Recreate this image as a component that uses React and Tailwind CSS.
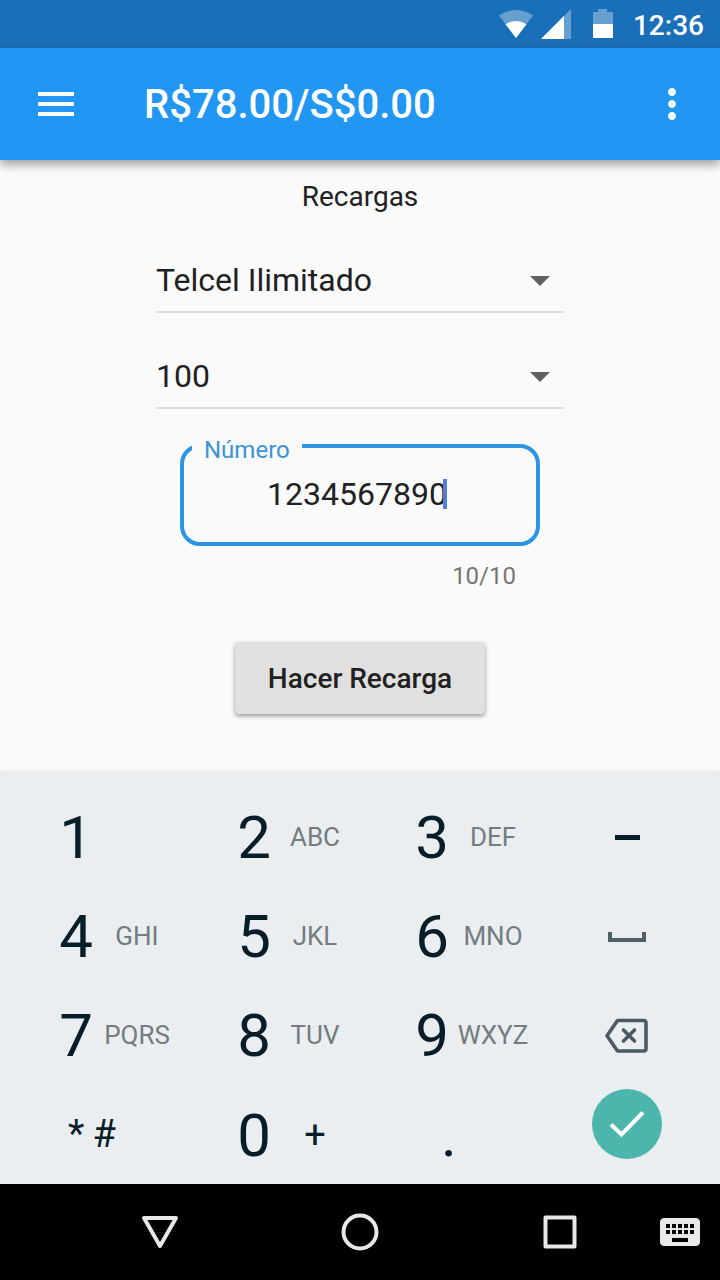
import { useState } from 'react'
import { MdMenu, MdMoreVert, MdArrowDropDown, MdKeyboard } from 'react-icons/md'

const CARRIERS = ['Telcel Ilimitado', 'Telcel', 'Movistar', 'Unefon']
const AMOUNTS = ['100', '50', '150', '200']
const MAX_LENGTH = 10

function WifiIcon() {
    return (
        <svg width="34" height="30" viewBox="0 0 34 30" aria-hidden="true">
            <path d="M17 29 L0 6.500 Q17 -4.500 34 6.500 Z" fill="#669fd0" />
            <path d="M17 29 L6.500 15.200 Q17 8.600 27.500 15.200 Z" fill="#fff" />
        </svg>
    )
}

function SignalIcon() {
    return (
        <svg width="30" height="30" viewBox="0 0 30 30" aria-hidden="true">
            <path d="M0 30 L30 0 V30 Z" fill="#669fd0" />
            <path d="M0 30 L23 7 V30 Z" fill="#fff" />
        </svg>
    )
}

function BatteryIcon() {
    return (
        <svg width="20" height="30" viewBox="0 0 20 30" aria-hidden="true">
            <path d="M0 3 H5 V0 H14 V3 H20 V15 H0 Z" fill="#669fd0" />
            <path d="M0 15 H20 V29 H0 Z" fill="#fff" />
        </svg>
    )
}

function BackspaceIcon() {
    return (
        <svg width="44" height="36" viewBox="0 0 44 36" fill="none" stroke="#4a5b63" strokeWidth="3.600" strokeLinejoin="round" strokeLinecap="round" aria-hidden="true">
            <path d="M12.500 2.500 H38.500 Q41 2.500 41 5 V30.500 Q41 33 38.500 33 H12.500 L2 17.700 Z" />
            <path d="M18.500 12 L29.500 23 M29.500 12 L18.500 23" />
        </svg>
    )
}

function Dropdown({ label, value, options, onChange }) {
    return (
        <div className="relative w-full">
            <select
                aria-label={label}
                value={value}
                onChange={(e) => onChange(e.target.value)}
                className="block h-16 w-full appearance-none border-b-2 border-[#dadada] bg-transparent pr-12 text-[32px] text-[#212121] outline-none"
            >
                {options.map((option) => (
                    <option key={option}>{option}</option>
                ))}
            </select>
            <MdArrowDropDown size={48} className="pointer-events-none absolute top-[7px] right-0 text-[#616161]" />
        </div>
    )
}

function DigitKey({ digit, letters, onPress }) {
    return (
        <button type="button" onClick={() => onPress(digit)} className="flex h-full items-center pr-3 pl-11">
            <span className="w-9 text-center text-6xl">{digit}</span>
            <span className="flex-1 text-center text-[26px] text-[#737c80]">{letters}</span>
        </button>
    )
}

export default function App() {
    const [carrier, setCarrier] = useState('Telcel Ilimitado')
    const [amount, setAmount] = useState('100')
    const [number, setNumber] = useState('1234567890')

    const addChar = (char) => {
        setNumber(prev => (prev + char).slice(0, MAX_LENGTH))
    }

    const removeChar = () => {
        setNumber(prev => prev.slice(0, -1))
    }

    return (
        <div className="flex min-h-screen flex-col bg-[#fafafa] font-[Roboto,sans-serif] text-[#212121]">
            {/* Status bar */}
            <div className="flex h-12 items-center justify-end bg-[#1a70b8] pr-4 text-white">
                <WifiIcon />
                <span className="ml-2"><SignalIcon /></span>
                <span className="mr-5 ml-[22px]"><BatteryIcon /></span>
                <span className="pt-1 text-[28px] leading-none font-medium">12:36</span>
            </div>

            {/* App bar */}
            <header className="relative z-10 flex h-28 items-center bg-[#2196f3] pr-6 pl-8 text-white shadow-[0_4px_10px_rgba(0,0,0,0.4)]">
                <button type="button" aria-label="Menú">
                    <MdMenu size={48} />
                </button>
                <h1 className="ml-16 flex-1 pt-0.5 text-[40px] font-medium">R$78.00/S$0.00</h1>
                <button type="button" aria-label="Más opciones">
                    <MdMoreVert size={48} />
                </button>
            </header>

            {/* Recharge form */}
            <main className="flex flex-1 flex-col items-center pt-4">
                <h2 className="text-[28px] leading-[42px]">Recargas</h2>
                <form onSubmit={(e) => e.preventDefault()} className="mt-[31px] flex w-[408px] flex-col items-center">
                    <div className="flex w-full flex-col gap-8">
                        <Dropdown label="Compañía" value={carrier} options={CARRIERS} onChange={setCarrier} />
                        <Dropdown label="Monto" value={amount} options={AMOUNTS} onChange={setAmount} />
                    </div>

                    <div className="mt-[21px] w-[360px]">
                        <fieldset className="flex justify-center rounded-[20px] border-4 border-[#2d93e3] px-2 pt-3 pb-7">
                            <legend className="px-3 pt-2 text-2xl leading-6 text-[#3b93d6]">
                                <label htmlFor="numero">Número</label>
                            </legend>
                            <div className="flex items-center justify-center pr-1.5">
                                <input
                                    id="numero"
                                    type="tel"
                                    value={number}
                                    maxLength={MAX_LENGTH}
                                    onChange={(e) => setNumber(e.target.value)}
                                    className="h-10 field-sizing-content bg-transparent text-[32px] caret-transparent outline-none"
                                />
                                <span className="-ml-1 h-[30px] w-1 bg-[#4f7fd9]"></span>
                            </div>
                        </fieldset>
                        <p className="mt-4 pr-6 text-right text-2xl leading-7 text-[#757575]">
                            {number.length}/{MAX_LENGTH}
                        </p>
                    </div>

                    <button
                        type="submit"
                        className="mt-[52px] h-[72px] min-w-[250px] rounded-sm bg-[#e0e0e0] px-8 pt-0.5 text-[28px] font-medium shadow-[0_2px_4px_rgba(0,0,0,0.4)]"
                    >
                        Hacer Recarga
                    </button>
                </form>
            </main>

            {/* Numeric keypad */}
            <div className="bg-[#eaeef1] px-[14px] pt-4 text-[#071e28] shadow-[0_0_4px_rgba(0,0,0,0.1)]">
                <div className="grid auto-rows-[99px] grid-cols-[178fr_178fr_178fr_158fr]">
                    <DigitKey digit="1" letters="" onPress={addChar} />
                    <DigitKey digit="2" letters="ABC" onPress={addChar} />
                    <DigitKey digit="3" letters="DEF" onPress={addChar} />
                    <button type="button" aria-label="Guion" onClick={() => addChar('-')} className="flex items-center justify-center">
                        <span className="h-[5px] w-[25px] bg-[#071e28]"></span>
                    </button>

                    <DigitKey digit="4" letters="GHI" onPress={addChar} />
                    <DigitKey digit="5" letters="JKL" onPress={addChar} />
                    <DigitKey digit="6" letters="MNO" onPress={addChar} />
                    <button type="button" aria-label="Espacio" onClick={() => addChar(' ')} className="flex items-center justify-center">
                        <span className="h-[10px] w-[38px] border-x-4 border-b-4 border-[#4f6069]"></span>
                    </button>

                    <DigitKey digit="7" letters="PQRS" onPress={addChar} />
                    <DigitKey digit="8" letters="TUV" onPress={addChar} />
                    <DigitKey digit="9" letters="WXYZ" onPress={addChar} />
                    <button type="button" aria-label="Borrar" onClick={removeChar} className="flex items-center justify-center">
                        <BackspaceIcon />
                    </button>

                    <button type="button" aria-label="Símbolos" className="flex items-center gap-2 pl-[54px] text-[38px]">
                        <span>*</span>
                        <span>#</span>
                    </button>
                    <button type="button" onClick={() => addChar('0')} className="flex items-center pt-0.5 pr-3 pl-11">
                        <span className="w-9 text-center text-6xl">0</span>
                        <span className="flex-1 text-center text-[38px]">+</span>
                    </button>
                    <button type="button" onClick={() => addChar('.')} className="flex items-center justify-center pt-0.5 pr-5 text-6xl">
                        .
                    </button>
                    <div className="flex items-start justify-center pt-1">
                        <button type="button" aria-label="Listo" className="flex size-[70px] items-center justify-center rounded-full bg-[#4db6ac]">
                            <svg width="36" height="28" viewBox="0 0 36 28" fill="none" stroke="#fff" strokeWidth="4" aria-hidden="true">
                                <path d="M2 14.500 L12.500 24.500 L34 2.500" />
                            </svg>
                        </button>
                    </div>
                </div>
            </div>

            {/* Navigation bar */}
            <nav className="grid h-24 grid-cols-[1fr_1fr_1fr_40px] items-center justify-items-center bg-black pr-5 pl-[60px] text-[#e8e8e8]">
                <button type="button" aria-label="Atrás">
                    <svg width="40" height="40" viewBox="0 0 40 40" fill="none" stroke="currentColor" strokeWidth="4" strokeLinejoin="round">
                        <path d="M4 6 H36 L20 34 Z" />
                    </svg>
                </button>
                <button type="button" aria-label="Inicio">
                    <svg width="40" height="40" viewBox="0 0 40 40" fill="none" stroke="currentColor" strokeWidth="4">
                        <circle cx="20" cy="20" r="16.500" />
                    </svg>
                </button>
                <button type="button" aria-label="Recientes">
                    <svg width="40" height="40" viewBox="0 0 40 40" fill="none" stroke="currentColor" strokeWidth="4" strokeLinejoin="round">
                        <rect x="5.500" y="5.500" width="29" height="29" />
                    </svg>
                </button>
                <button type="button" aria-label="Cambiar teclado">
                    <MdKeyboard size={48} />
                </button>
            </nav>
        </div>
    )
}
